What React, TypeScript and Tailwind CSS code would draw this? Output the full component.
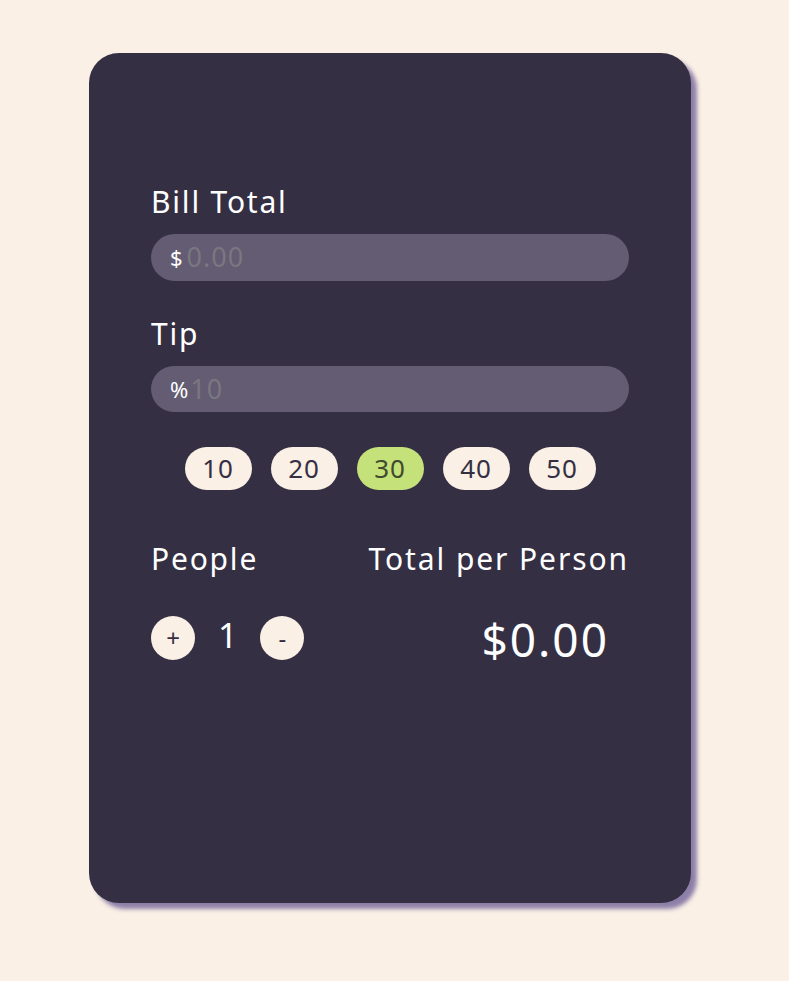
import React from "react";

export default function App() {
  const tips = [10, 20, 30, 40, 50];
  return (
    <div
      className="min-h-screen w-full bg-[#faf0e6] pt-[53px] pl-[89px]"
      style={{ fontFamily: "'Noto Sans', sans-serif" }}
    >
      <div className="w-[602px] h-[850px] rounded-[30px] bg-[#352f44] shadow-[6px_6px_4px_#8e7fa8] px-[62px] pt-[131px] text-white">
        <div className="text-[30px] leading-[36px] tracking-[1.8px]">Bill Total</div>
        <div className="mt-[14px] h-[47px] rounded-full bg-[#635c72] flex items-center pl-[19px]">
          <span className="text-[22px]">$</span>
          <span className="ml-[4px] text-[27px] tracking-[1px] text-[#7a7780]">0.00</span>
        </div>
        <div className="mt-[35px] text-[30px] leading-[36px] tracking-[1.8px]">Tip</div>
        <div className="mt-[14px] h-[46px] rounded-full bg-[#635c72] flex items-center pl-[19px]">
          <span className="text-[22px]">%</span>
          <span className="ml-[2px] text-[27px] tracking-[1px] text-[#7a7780]">10</span>
        </div>
        <div className="mt-[35px] flex justify-center gap-[19px]">
          {tips.map((t) => (
            <div
              key={t}
              className={`w-[67px] h-[43px] rounded-full flex items-center justify-center text-[26px] tracking-[1px] ${
                t === 30 ? "bg-[#c5e17a] text-[#3f4a2e]" : "bg-[#faf0e6] text-[#352f44]"
              }`}
            >
              {t}
            </div>
          ))}
        </div>
        <div className="mt-[51px] flex justify-between">
          <div>
            <div className="text-[30px] leading-[36px] tracking-[1.8px]">People</div>
            <div className="mt-[39px] flex items-center gap-[23px]">
              <div className="w-[44px] h-[44px] rounded-full bg-[#faf0e6] text-[#352f44] flex items-center justify-center text-[24px]">
                +
              </div>
              <div className="text-[34px] leading-none -mt-[6px]">1</div>
              <div className="w-[44px] h-[44px] rounded-full bg-[#faf0e6] text-[#352f44] flex items-center justify-center text-[24px]">
                -
              </div>
            </div>
          </div>
          <div className="flex flex-col items-end">
            <div className="text-[30px] leading-[36px] tracking-[1.9px]">Total per Person</div>
            <div className="mt-[36px] pr-[20px] text-[46px] leading-[52px] tracking-[2px]">$0.00</div>
          </div>
        </div>
      </div>
    </div>
  );
}
